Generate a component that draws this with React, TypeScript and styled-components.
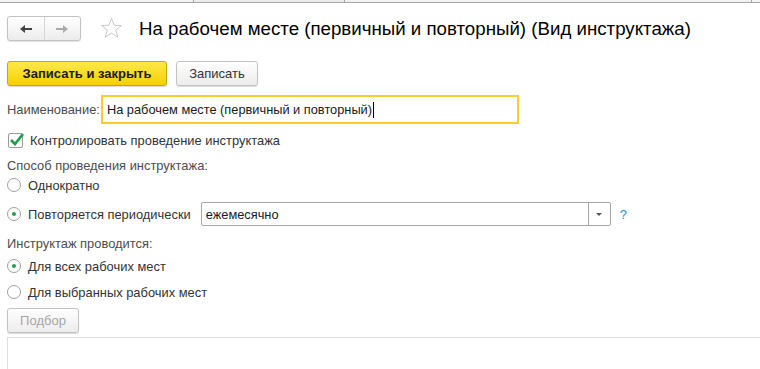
import React from "react"
import styled, { createGlobalStyle } from "styled-components"

const GlobalStyle = createGlobalStyle`
  html, body {
    margin: 0;
    padding: 0;
    background: #fff;
    font-family: Arial, "Liberation Sans", sans-serif;
    overflow: hidden;
  }
`

const Page = styled.div`
  width: 760px;
  height: 369px;
  overflow: hidden;
  background: #fff;
`

const TabStrip = styled.div`
  display: flex;
  height: 2px;
  background: #f2f2f2;
  border-bottom: 1px solid #a6a6a6;
`

const TabCell = styled.div<{ width: number; active?: boolean }>`
  width: ${p => p.width}px;
  border-right: 1px solid #a6a6a6;
  background: ${p => (p.active ? "#ececec" : "transparent")};
`

const Header = styled.div`
  display: flex;
  align-items: center;
  padding: 12px 0 0 7px;
  height: 27px;
`

const NavGroup = styled.div`
  display: flex;
  width: 72px;
  height: 23px;
  border: 1px solid #c2c2c2;
  border-radius: 3px;
  background: linear-gradient(#ffffff, #ececec);
  box-shadow: 0 1px 1px rgba(0, 0, 0, 0.12);
`

const NavButton = styled.div`
  flex: 1;
  display: flex;
  align-items: center;
  justify-content: center;
  & + & {
    border-left: 1px solid #d6d6d6;
  }
`

const Star = styled.div`
  margin-left: 19px;
  width: 23px;
  height: 23px;
`

const Title = styled.h1`
  margin: 0 0 0 16px;
  font-size: 18.7px;
  font-weight: normal;
  color: #000;
  white-space: nowrap;
`

const Form = styled.div`
  display: flex;
  flex-direction: column;
  padding: 19px 0 0 7px;
`

const Toolbar = styled.div`
  display: flex;
  gap: 9px;
  margin-bottom: 9px;
`

const Button = styled.div<{ primary?: boolean; disabled?: boolean; w: number }>`
  box-sizing: border-box;
  width: ${p => p.w}px;
  height: 25px;
  display: flex;
  align-items: center;
  justify-content: center;
  border-radius: 3px;
  font-size: 13px;
  font-weight: ${p => (p.primary ? "bold" : "normal")};
  color: ${p => (p.disabled ? "#a6a6a6" : p.primary ? "#1a1a1a" : "#333")};
  border: 1px solid ${p => (p.primary ? "#c8a800" : "#c2c2c2")};
  background: ${p =>
    p.primary ? "linear-gradient(#ffe94a, #f5d000)" : "linear-gradient(#ffffff, #ececec)"};
  box-shadow: 0 1px 1px rgba(0, 0, 0, 0.15);
`

const FieldRow = styled.div`
  display: flex;
  align-items: center;
  gap: 1px;
  margin-bottom: 6px;
`

const Label = styled.span<{ dark?: boolean }>`
  font-size: 12.9px;
  color: ${p => (p.dark ? "#333" : "#4d4d4d")};
  white-space: nowrap;
`

const NameInput = styled.div`
  box-sizing: border-box;
  width: 418px;
  height: 29px;
  border: 2px solid #f7ce2d;
  display: flex;
  align-items: center;
  padding-left: 4px;
  font-size: 12.8px;
  color: #1a1a1a;
`

const Caret = styled.span`
  display: inline-block;
  width: 1px;
  height: 16px;
  background: #000;
  margin-left: 1px;
`

const OptionRow = styled.div<{ h: number }>`
  display: flex;
  align-items: center;
  gap: 7px;
  height: ${p => p.h}px;
`

const CheckBox = styled.div`
  box-sizing: border-box;
  width: 15px;
  height: 15px;
  margin-left: 1px;
  border: 1px solid #9a9a9a;
  border-radius: 2px;
  position: relative;
  background: #fff;
`

const Radio = styled.div<{ checked?: boolean }>`
  box-sizing: border-box;
  width: 14px;
  height: 14px;
  border: 1px solid #a0a0a0;
  border-radius: 50%;
  background: #fff;
  display: flex;
  align-items: center;
  justify-content: center;
  &::after {
    content: "";
    display: ${p => (p.checked ? "block" : "none")};
    width: 4px;
    height: 4px;
    border-radius: 50%;
    background: #1e9e4c;
  }
`

const GroupTitle = styled.div<{ mt?: number }>`
  font-size: 12.9px;
  color: #4d4d4d;
  height: 16px;
  line-height: 16px;
  margin-top: ${p => p.mt || 0}px;
`

const Select = styled.div`
  box-sizing: border-box;
  display: flex;
  width: 410px;
  height: 24px;
  margin-left: 3px;
  border: 1px solid #a6a6a6;
  border-radius: 2px;
`

const SelectValue = styled.div`
  flex: 1;
  display: flex;
  align-items: center;
  padding-left: 4px;
  font-size: 12.8px;
  color: #1a1a1a;
`

const SelectArrow = styled.div`
  width: 21px;
  border-left: 1px solid #a6a6a6;
  display: flex;
  align-items: center;
  justify-content: center;
  &::after {
    content: "";
    border-left: 3px solid transparent;
    border-right: 3px solid transparent;
    border-top: 3px solid #555;
  }
`

const Help = styled.span`
  margin-left: 2px;
  font-size: 13px;
  color: #2a8fd6;
`

const PickButton = styled(Button)`
  margin-top: 4px;
`

const TableBox = styled.div`
  margin-top: 4px;
  height: 40px;
  border: 1px solid #e0e0e0;
  border-right: none;
`

const Arrow = ({ color, flip }: { color: string; flip?: boolean }) => (
  <svg width="14" height="10" viewBox="0 0 14 10" style={flip ? { transform: "scaleX(-1)" } : undefined}>
    <path d="M1 5 L6 1 L6 4 L13 4 L13 6 L6 6 L6 9 Z" fill={color} />
  </svg>
)

export default function App() {
  return (
    <Page>
      <GlobalStyle />
      <TabStrip>
        <TabCell width={193} />
        <TabCell width={150} active />
        <TabCell width={406} />
      </TabStrip>
      <Header>
        <NavGroup>
          <NavButton>
            <Arrow color="#444" />
          </NavButton>
          <NavButton>
            <Arrow color="#aaa" flip />
          </NavButton>
        </NavGroup>
        <Star>
          <svg width="23" height="23" viewBox="0 0 24 24">
            <path
              d="M12 1.5 L14.8 8.6 L22.4 8.9 L16.4 13.6 L18.5 21 L12 16.8 L5.5 21 L7.6 13.6 L1.6 8.9 L9.2 8.6 Z"
              fill="none"
              stroke="#c4c4c4"
              strokeWidth="1"
            />
          </svg>
        </Star>
        <Title>На рабочем месте (первичный и повторный) (Вид инструктажа)</Title>
      </Header>
      <Form>
        <Toolbar>
          <Button primary w={160}>Записать и закрыть</Button>
          <Button w={82}>Записать</Button>
        </Toolbar>
        <FieldRow>
          <Label>Наименование:</Label>
          <NameInput>
            На рабочем месте (первичный и повторный)
            <Caret />
          </NameInput>
        </FieldRow>
        <OptionRow h={20}>
          <CheckBox>
            <svg width="16" height="14" viewBox="0 0 16 14" style={{ position: "absolute", left: 0, top: -1 }}>
              <path d="M2 7 L6 11 L14 1" fill="none" stroke="#1e9e4c" strokeWidth="2.6" />
            </svg>
          </CheckBox>
          <Label dark>Контролировать проведение инструктажа</Label>
        </OptionRow>
        <GroupTitle mt={8}>Способ проведения инструктажа:</GroupTitle>
        <OptionRow h={22}>
          <Radio />
          <Label dark>Однократно</Label>
        </OptionRow>
        <OptionRow h={36}>
          <Radio checked />
          <Label dark>Повторяется периодически</Label>
          <Select>
            <SelectValue>ежемесячно</SelectValue>
            <SelectArrow />
          </Select>
          <Help>?</Help>
        </OptionRow>
        <GroupTitle mt={4}>Инструктаж проводится:</GroupTitle>
        <OptionRow h={28}>
          <Radio checked />
          <Label dark>Для всех рабочих мест</Label>
        </OptionRow>
        <OptionRow h={24}>
          <Radio />
          <Label dark>Для выбранных рабочих мест</Label>
        </OptionRow>
        <PickButton disabled w={72}>Подбор</PickButton>
        <TableBox />
      </Form>
    </Page>
  )
}
